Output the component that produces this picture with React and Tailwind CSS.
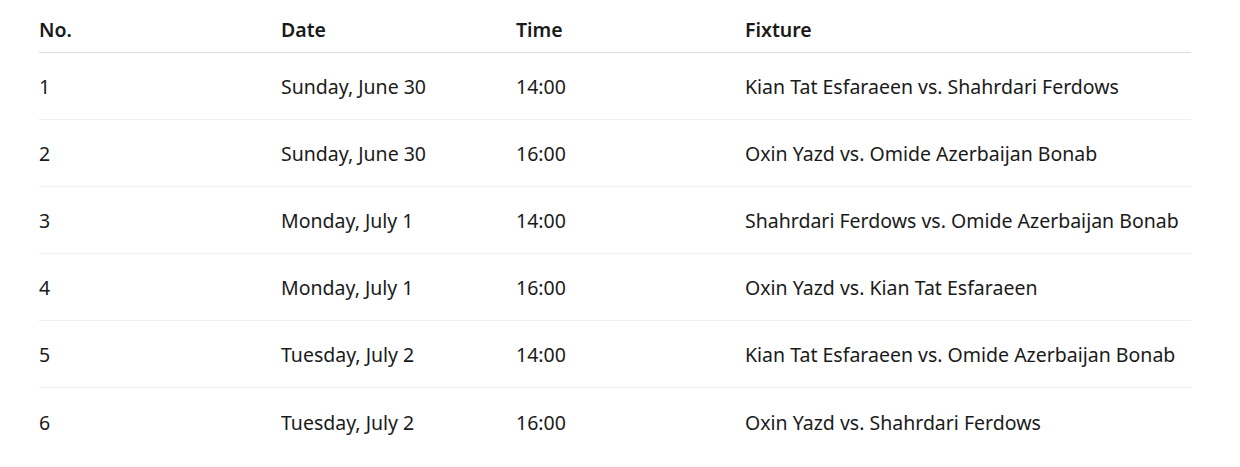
const fixtures = [
  { no: 1, date: "Sunday, June 30", time: "14:00", fixture: "Kian Tat Esfaraeen vs. Shahrdari Ferdows" },
  { no: 2, date: "Sunday, June 30", time: "16:00", fixture: "Oxin Yazd vs. Omide Azerbaijan Bonab" },
  { no: 3, date: "Monday, July 1", time: "14:00", fixture: "Shahrdari Ferdows vs. Omide Azerbaijan Bonab" },
  { no: 4, date: "Monday, July 1", time: "16:00", fixture: "Oxin Yazd vs. Kian Tat Esfaraeen" },
  { no: 5, date: "Tuesday, July 2", time: "14:00", fixture: "Kian Tat Esfaraeen vs. Omide Azerbaijan Bonab" },
  { no: 6, date: "Tuesday, July 2", time: "16:00", fixture: "Oxin Yazd vs. Shahrdari Ferdows" },
];

export default function App() {
  return (
    <div
      className="min-h-screen bg-white pt-2 pl-[39px] pr-[49px] text-[19.5px] text-[#1a1a1a]"
      style={{ fontFamily: '"Noto Sans", "Open Sans", sans-serif' }}
    >
      {/* Header */}
      <div className="grid grid-cols-[242px_235px_229px_1fr] h-[45px] items-center border-b border-[#dcdcdc] font-semibold">
        <div>No.</div>
        <div>Date</div>
        <div>Time</div>
        <div>Fixture</div>
      </div>

      {fixtures.map((f, i) => (
        <div
          key={f.no}
          className={
            "grid grid-cols-[242px_235px_229px_1fr] h-[67px] items-center pt-[2px] " +
            (i < fixtures.length - 1 ? "border-b border-[#efefef]" : "")
          }
        >
          <div>{f.no}</div>
          <div>{f.date}</div>
          <div>{f.time}</div>
          <div>{f.fixture}</div>
        </div>
      ))}
    </div>
  );
}
